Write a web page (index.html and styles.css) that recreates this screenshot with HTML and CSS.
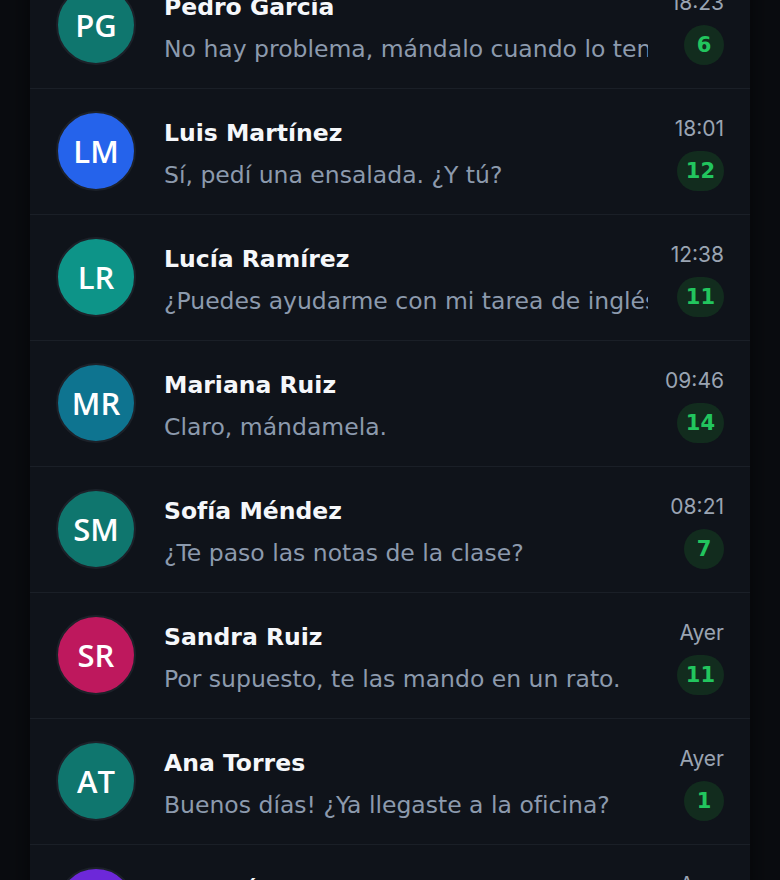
FILE: index.html
```html
<!DOCTYPE html>
<html lang="es">
<head>
    <meta charset="UTF-8">
    <meta name="viewport" content="width=device-width, initial-scale=1.0">
    <title>Chats</title>
    <link rel="stylesheet" href="styles.css">
</head>
<body>
    <!-- Lista de conversaciones -->
    <main class="chat-panel">
        <ul class="chat-list">
            <li class="chat-item">
                <div class="avatar av-teal">PG</div>
                <div class="chat-info">
                    <span class="chat-name">Pedro García</span>
                    <span class="chat-msg">No hay problema, mándalo cuando lo tengas listo.</span>
                </div>
                <div class="chat-meta">
                    <span class="chat-time">18:23</span>
                    <span class="badge">6</span>
                </div>
            </li>
            <li class="chat-item">
                <div class="avatar av-blue">LM</div>
                <div class="chat-info">
                    <span class="chat-name">Luis Martínez</span>
                    <span class="chat-msg">Sí, pedí una ensalada. ¿Y tú?</span>
                </div>
                <div class="chat-meta">
                    <span class="chat-time">18:01</span>
                    <span class="badge">12</span>
                </div>
            </li>
            <li class="chat-item">
                <div class="avatar av-green">LR</div>
                <div class="chat-info">
                    <span class="chat-name">Lucía Ramírez</span>
                    <span class="chat-msg">¿Puedes ayudarme con mi tarea de inglés?</span>
                </div>
                <div class="chat-meta">
                    <span class="chat-time">12:38</span>
                    <span class="badge">11</span>
                </div>
            </li>
            <li class="chat-item">
                <div class="avatar av-cyan">MR</div>
                <div class="chat-info">
                    <span class="chat-name">Mariana Ruiz</span>
                    <span class="chat-msg">Claro, mándamela.</span>
                </div>
                <div class="chat-meta">
                    <span class="chat-time">09:46</span>
                    <span class="badge">14</span>
                </div>
            </li>
            <li class="chat-item">
                <div class="avatar av-teal">SM</div>
                <div class="chat-info">
                    <span class="chat-name">Sofía Méndez</span>
                    <span class="chat-msg">¿Te paso las notas de la clase?</span>
                </div>
                <div class="chat-meta">
                    <span class="chat-time">08:21</span>
                    <span class="badge">7</span>
                </div>
            </li>
            <li class="chat-item">
                <div class="avatar av-pink">SR</div>
                <div class="chat-info">
                    <span class="chat-name">Sandra Ruiz</span>
                    <span class="chat-msg">Por supuesto, te las mando en un rato.</span>
                </div>
                <div class="chat-meta">
                    <span class="chat-time">Ayer</span>
                    <span class="badge">11</span>
                </div>
            </li>
            <li class="chat-item">
                <div class="avatar av-teal">AT</div>
                <div class="chat-info">
                    <span class="chat-name">Ana Torres</span>
                    <span class="chat-msg">Buenos días! ¿Ya llegaste a la oficina?</span>
                </div>
                <div class="chat-meta">
                    <span class="chat-time">Ayer</span>
                    <span class="badge">1</span>
                </div>
            </li>
            <li class="chat-item">
                <div class="avatar av-purple">AG</div>
                <div class="chat-info">
                    <span class="chat-name">Ana Gómez</span>
                    <span class="chat-msg">Nos vemos mañana en la reunión.</span>
                </div>
                <div class="chat-meta">
                    <span class="chat-time">Ayer</span>
                    <span class="badge">3</span>
                </div>
            </li>
        </ul>
    </main>
</body>
</html>
```

FILE: styles.css
```css
body {
    margin: 0;
    padding: 0;
    background-color: #0a0c10;
    font-family: 'DejaVu Sans', 'Inter', sans-serif;
    color: #f3f5f8;
    overflow: hidden;
}
.chat-panel {
    max-width: 720px;
    margin: -37px auto 0;
    background-color: #0f131a;
    box-shadow: 0 0 24px rgba(0, 0, 0, 0.6);
    min-height: 1000px;
}
.chat-list {
    list-style: none;
    margin: 0;
    padding: 0;
}
.chat-item {
    display: flex;
    align-items: center;
    height: 80px;
    padding: 22px 26px 23px 26px;
    border-bottom: 1px solid #1a1f27;
}
.avatar {
    flex: 0 0 auto;
    width: 76px;
    height: 76px;
    margin-right: 28px;
    border: 2px solid #1c2129;
    border-radius: 50%;
    display: flex;
    align-items: center;
    justify-content: center;
    font-family: 'Open Sans', sans-serif;
    font-weight: 600;
    font-size: 31px;
    color: #ffffff;
}
.av-teal { background-color: #0f766e; }
.av-blue { background-color: #2563eb; }
.av-green { background-color: #0d9488; }
.av-cyan { background-color: #0e7490; }
.av-pink { background-color: #be185d; }
.av-purple { background-color: #6d28d9; }
.chat-info {
    flex: 1;
    min-width: 0;
    display: flex;
    flex-direction: column;
    gap: 10px;
    padding-top: 5px;
}
.chat-name {
    font-size: 23.5px;
    font-weight: 700;
    line-height: 32px;
    color: #f5f7fa;
}
.chat-msg {
    font-size: 23.5px;
    line-height: 32px;
    color: #8c9aad;
    white-space: nowrap;
    overflow: hidden;
}
.chat-meta {
    flex: 0 0 64px;
    margin-left: 12px;
    display: flex;
    flex-direction: column;
    align-items: flex-end;
    gap: 7px;
    padding-top: 2px;
}
.chat-time {
    font-family: 'Inter', sans-serif;
    font-size: 21px;
    line-height: 31px;
    color: #9aa4b2;
}
.badge {
    min-width: 40px;
    height: 40px;
    padding: 0 9px;
    box-sizing: border-box;
    border-radius: 20px;
    background-color: #122c1e;
    color: #22c55e;
    font-weight: 700;
    font-size: 21px;
    display: flex;
    align-items: center;
    justify-content: center;
}
```
